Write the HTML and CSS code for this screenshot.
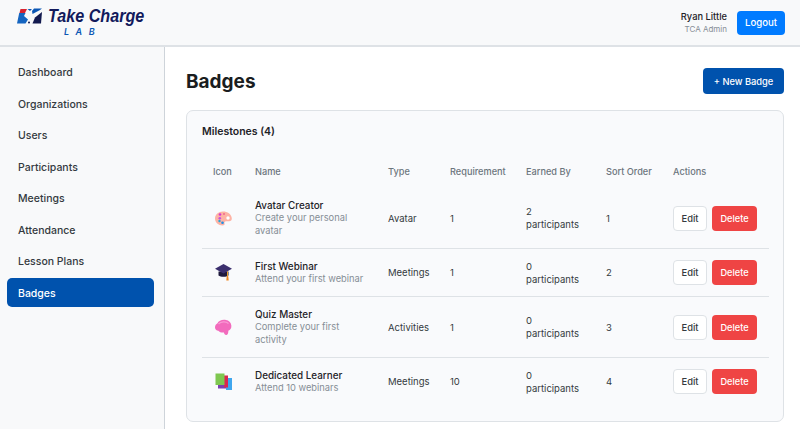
FILE: index.html
```html
<!DOCTYPE html>
<html lang="en">
<head>
<meta charset="utf-8">
<title>Badges</title>
<link rel="stylesheet" href="styles.css">
</head>
<body>
<header class="topbar">
  <div class="logo">
    <svg class="logo-mark" width="27" height="17" viewBox="0 0 27 17">
      <path d="M2.500 5 L3.500 1 H10 L8 5 Z" fill="#d8232f"/>
      <path d="M10.500 1 H15 L13 3 Z" fill="#0a56b4"/>
      <path d="M0 15.500 L2.200 5 H8.500 L7 8 L11 11.500 L8.500 15.500 Z" fill="#1565c0"/>
      <path d="M15 3 L17 0.500 H25 L23 2 L15.500 6 Z" fill="#0a56b4"/>
      <path d="M15.500 15.500 L18 9.500 L25 4 L24 15.500 Z" fill="#121a4f"/>
      <circle cx="12" cy="14.500" r="1" fill="#121a4f"/>
    </svg>
    <div class="logo-words">
      <span class="logo-title">Take Charge</span>
      <span class="logo-sub">LAB</span>
    </div>
  </div>
  <div class="account">
    <div class="user">
      <div class="user-name">Ryan Little</div>
      <div class="user-role">TCA Admin</div>
    </div>
    <button class="btn btn-logout">Logout</button>
  </div>
</header>
<div class="shell">
  <nav class="sidebar">
    <a class="nav-item">Dashboard</a>
    <a class="nav-item">Organizations</a>
    <a class="nav-item">Users</a>
    <a class="nav-item">Participants</a>
    <a class="nav-item">Meetings</a>
    <a class="nav-item">Attendance</a>
    <a class="nav-item">Lesson Plans</a>
    <a class="nav-item active">Badges</a>
  </nav>
  <main class="content">
    <div class="page-head">
      <h1>Badges</h1>
      <button class="btn btn-new">+ New Badge</button>
    </div>
    <section class="card">
      <h2>Milestones (4)</h2>
      <table class="badges">
        <colgroup>
          <col class="c-icon"><col class="c-name"><col class="c-type"><col class="c-req"><col class="c-earned"><col class="c-sort"><col class="c-actions">
        </colgroup>
        <thead>
          <tr><th>Icon</th><th>Name</th><th>Type</th><th>Requirement</th><th>Earned By</th><th>Sort Order</th><th>Actions</th></tr>
        </thead>
        <tbody>
          <tr>
            <td>
              <svg class="icon" width="17" height="17" viewBox="0 0 17 17">
                <path d="M8 1.500C3.500 1.500 0 4.500 0 8.500s3.500 7 7.500 7c1.800 0 2.400-.9 2-2-.4-1.300.2-2.300 1.600-2.300h3c1.800 0 2.900-1 2.700-2.900C16.400 4.200 12.500 1.500 8 1.500z" fill="#fdb3a5"/>
                <circle cx="13" cy="8" r="1.700" fill="#fff"/>
                <circle cx="5" cy="4.500" r="1.300" fill="#d838d0"/>
                <circle cx="9" cy="4" r="1" fill="#ef6a8a"/>
                <circle cx="4.800" cy="8.200" r="1.300" fill="#c94fe0"/>
                <circle cx="4.500" cy="11" r="1.200" fill="#28a8d8"/>
                <circle cx="7.500" cy="12.800" r="1.300" fill="#1e90e6"/>
              </svg>
            </td>
            <td><div class="b-name">Avatar Creator</div><div class="b-desc">Create your personal avatar</div></td>
            <td>Avatar</td><td>1</td><td>2 participants</td><td>1</td>
            <td><div class="actions"><button class="btn btn-edit">Edit</button><button class="btn btn-delete">Delete</button></div></td>
          </tr>
          <tr>
            <td>
              <svg class="icon" width="17" height="17" viewBox="0 0 17 17">
                <path d="M3.500 7.500v4c2 1.800 8 1.800 10 0v-4z" fill="#1f1a3d"/>
                <path d="M8.500 0 0 4.800 8.500 9.500 17 4.800z" fill="#3b2f6e"/>
                <path d="M12.500 7.500v5.500" stroke="#e8a02a" stroke-width="1" fill="none"/>
                <path d="M11.800 12h1.400l.5 4.500h-2.400z" fill="#f08a24"/>
              </svg>
            </td>
            <td><div class="b-name">First Webinar</div><div class="b-desc">Attend your first webinar</div></td>
            <td>Meetings</td><td>1</td><td>0 participants</td><td>2</td>
            <td><div class="actions"><button class="btn btn-edit">Edit</button><button class="btn btn-delete">Delete</button></div></td>
          </tr>
          <tr>
            <td>
              <svg class="icon" width="17" height="17" viewBox="0 0 17 17">
                <path d="M0 8.500C0 6.500 1.200 5 2.500 4.300 3.500 1.500 8 0 11 1c2.800.3 5 2.500 5.300 5.300.5 2.800-1 5-3 5.500.2 1.800-.4 3.900-1.800 4.200-1.300.3-2.300-.8-2.600-2.500-2 .2-4.500-.3-5.600-1.800C1.500 11.500 0 10.500 0 8.500z" fill="#f26bbd"/>
                <path d="M3.500 5c2.500-2.500 7-3 10-.5" stroke="#f99ad6" stroke-width="1.300" fill="none"/>
              </svg>
            </td>
            <td><div class="b-name">Quiz Master</div><div class="b-desc">Complete your first activity</div></td>
            <td>Activities</td><td>1</td><td>0 participants</td><td>3</td>
            <td><div class="actions"><button class="btn btn-edit">Edit</button><button class="btn btn-delete">Delete</button></div></td>
          </tr>
          <tr>
            <td>
              <svg class="icon" width="17" height="17" viewBox="0 0 17 17">
                <rect x="3" y="6" width="9" height="9.500" fill="#7a3fb0"/>
                <rect x="11" y="5" width="6" height="12" fill="#3fa6ee"/>
                <rect x="9" y="2.500" width="4" height="12" fill="#d9264f"/>
                <rect x="0.500" y="0.500" width="9" height="11.500" fill="#7fc750"/>
              </svg>
            </td>
            <td><div class="b-name">Dedicated Learner</div><div class="b-desc">Attend 10 webinars</div></td>
            <td>Meetings</td><td>10</td><td>0 participants</td><td>4</td>
            <td><div class="actions"><button class="btn btn-edit">Edit</button><button class="btn btn-delete">Delete</button></div></td>
          </tr>
        </tbody>
      </table>
    </section>
  </main>
</div>
</body>
</html>
```
FILE: styles.css
```css
* { box-sizing: border-box; }
html, body { margin: 0; height: 100%; overflow: hidden; }
body { font-family: Inter, "Liberation Sans", sans-serif; background: #fff; color: #1f2328; }
button { font-family: inherit; cursor: pointer; }

.topbar { height: 47px; display: flex; justify-content: space-between; align-items: center; padding: 0 15px 0 17px; background: #f8f9fa; border-bottom: 2px solid #dee2e6; }
.logo { display: flex; align-items: flex-start; gap: 4px; margin-bottom: 3px; }
.logo-mark { margin-top: 2px; }
.logo-words { display: flex; flex-direction: column; align-items: flex-start; }
.logo-title { font-size: 19px; line-height: 20px; font-weight: 700; font-style: italic; color: #121a5c; font-family: "Liberation Sans", sans-serif; transform: scaleX(.85); transform-origin: left center; white-space: nowrap; }
.logo-sub { font-size: 9px; line-height: 10px; margin-top: 1px; font-weight: 600; font-style: italic; color: #0a56b4; letter-spacing: 6.500px; margin-left: 16px; }
.account { display: flex; align-items: center; gap: 10px; }
.user { text-align: right; }
.user-name { font-size: 9.300px; line-height: 12px; font-weight: 500; color: #1f2328; }
.user-role { font-size: 8px; line-height: 12px; color: #868e96; }

.btn { border: 0; border-radius: 4px; font-weight: 500; padding: 0; }
.btn-logout { width: 48px; height: 24px; background: #007bff; color: #fff; font-size: 9.600px; }
.btn-new { width: 81px; height: 26px; background: #0052ad; color: #fff; font-size: 9.300px; }
.btn-edit { width: 34px; height: 25px; background: #fff; color: #343a40; border: 1px solid #dee2e6; font-size: 9.400px; }
.btn-delete { width: 45px; height: 25px; background: #ef4444; color: #fff; font-size: 9.200px; }

.shell { display: flex; height: 382px; }
.sidebar { width: 165px; flex: none; padding: 10px 10px 0 7px; background: #f8f9fa; border-right: 1px solid #ced4da; display: flex; flex-direction: column; gap: 2.500px; }
.nav-item { display: block; height: 29px; line-height: 31px; padding: 0 11px; font-size: 10.500px; font-weight: 500; color: #343a40; border-radius: 5px; }
.nav-item.active { background: #0052ad; color: #fff; }

.content { flex: 1; padding: 20px 16px 0 21px; min-width: 0; }
.page-head { display: flex; justify-content: space-between; align-items: center; margin-bottom: 15px; }
h1 { margin: 0; padding-top: 2px; font-size: 19px; line-height: 26px; font-weight: 700; color: #1a1d20; }
.card { background: #f9fafc; border: 1px solid #dee2e6; border-radius: 7px; padding: 14px 15px 15px; height: 312px; }
h2 { margin: 0 0 16px; font-size: 10.500px; line-height: 14px; font-weight: 600; color: #1f2328; }

.badges { width: 567px; border-collapse: collapse; table-layout: fixed; font-size: 9.500px; }
.c-icon { width: 53px; }
.c-name { width: 133px; }
.c-type { width: 62px; }
.c-req { width: 76px; }
.c-earned { width: 80px; }
.c-sort { width: 67px; }
.c-actions { width: 96px; }
.badges th { height: 33px; padding: 0; text-align: left; font-weight: 500; color: #6c757d; font-size: 9.200px; }
.badges td { padding: 11px 14px 10.500px 0; vertical-align: middle; color: #343a40; line-height: 13px; }
.badges td:nth-child(2) { padding-right: 22px; }
.badges td:nth-child(5) { padding-right: 24px; }
.badges td:last-child { padding-right: 0; }
.badges tbody tr { border-bottom: 1px solid #dee2e6; }
.badges tbody tr:last-child { border-bottom: 0; }
.badges th:first-child { padding-left: 11px; }
.badges td:first-child { padding-left: 13px; padding-right: 0; }
.icon { display: block; }
.b-name { font-weight: 500; font-size: 9.900px; color: #1f2328; }
.b-desc { color: #868e96; font-size: 9.300px; line-height: 12.500px; }
.actions { display: flex; gap: 5px; }
```
